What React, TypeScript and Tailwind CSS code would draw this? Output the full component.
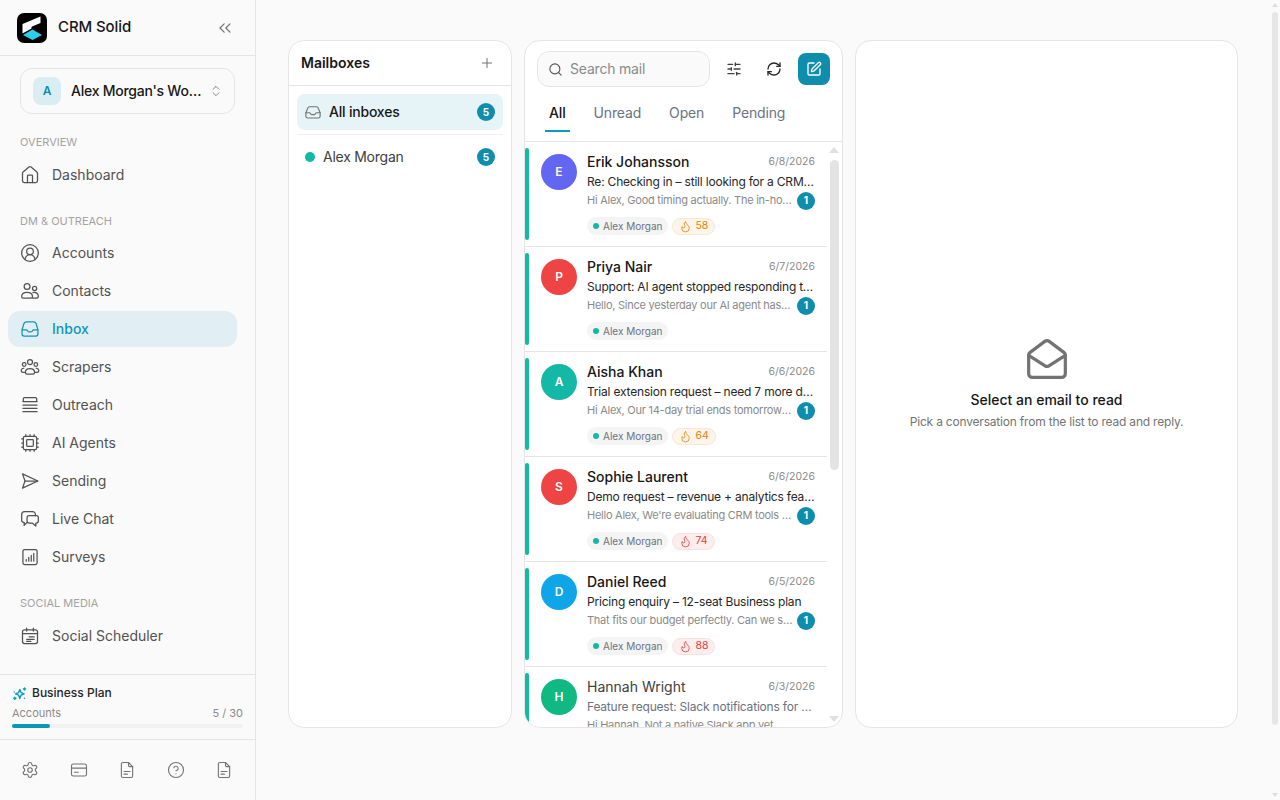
import React from "react";
import { House, CircleUserRound, ChevronsLeft, ChevronsUpDown, Settings, CircleHelp, Plus, Search, SlidersHorizontal, RefreshCw, SquarePen, Flame, MailOpen, Cpu } from "lucide-react";

type IconProps = { className?: string };
const Svg = ({ className, children }: IconProps & { children: React.ReactNode }) => (
  <svg viewBox="0 0 24 24" fill="none" stroke="currentColor" strokeWidth={1.5} strokeLinecap="round" strokeLinejoin="round" className={className}>
    {children}
  </svg>
);
const ContactsIcon = (p: IconProps) => (
  <Svg {...p}>
    <circle cx="8.5" cy="6.5" r="3.5" />
    <circle cx="17.5" cy="9" r="2.5" />
    <path d="M2 18.5C2 15.5 4.7 13.5 8.5 13.5S15 15.5 15 18.5C15 20 14 20.5 13 20.5H4C3 20.5 2 20 2 18.5Z" />
    <path d="M15.5 14C19 13.2 22 15 22 18C22 19.5 21 20.5 20 20.5H15" />
  </Svg>
);
const InboxIcon = (p: IconProps) => (
  <Svg {...p}>
    <path d="M2.500 13V18a2.500 2.500 0 0 0 2.500 2.500h14a2.500 2.500 0 0 0 2.500-2.500V13L19.500 6a3.500 3.500 0 0 0-3-2.500h-9A3.500 3.500 0 0 0 4.500 6Z" />
    <path d="M2.500 13h5c.8 0 1.200.4 1.600 1.100l.3.600c.3.500.7.800 1.300.800h2.600c.6 0 1-.3 1.300-.8l.3-.6c.4-.7.800-1.100 1.600-1.100h5" />
  </Svg>
);
const ScrapersIcon = (p: IconProps) => (
  <Svg {...p}>
    <circle cx="12" cy="6" r="3" />
    <circle cx="5" cy="9" r="2.2" />
    <circle cx="19" cy="9" r="2.2" />
    <path d="M6.500 18.500c0-2.800 2.300-4.500 5.500-4.500s5.500 1.700 5.500 4.500c0 1.300-1 2-2 2h-7c-1 0-2-.7-2-2Z" />
    <path d="M4.500 13.500C2.500 13.800 1.500 15 1.500 16.500c0 1.200.8 2 2 2H6" />
    <path d="M19.500 13.500c2 .3 3 1.500 3 3 0 1.200-.8 2-2 2H18" />
  </Svg>
);
const OutreachIcon = (p: IconProps) => (
  <Svg {...p}>
    <path d="M4 7.500V4.500A1.500 1.500 0 0 1 5.500 3h13A1.500 1.500 0 0 1 20 4.500v3" />
    <path d="M3.500 8h17M3.500 12h17M3.500 16h17M3.500 20h17" />
  </Svg>
);
const SendingIcon = (p: IconProps) => (
  <Svg {...p}>
    <path d="M3 3.500 21.500 12 3 20.500 6 12Z" />
    <path d="M6 12h15" />
  </Svg>
);
const ChatIcon = (p: IconProps) => (
  <Svg {...p}>
    <path d="M8 16.500 5 19.500v-3.500H4.500A2.500 2.500 0 0 1 2 13.500v-7A3.500 3.500 0 0 1 5.500 3h9.500A3.500 3.500 0 0 1 18.500 6.500V8" />
    <path d="M11 8h8.500A2.500 2.500 0 0 1 22 10.500v4a2.500 2.500 0 0 1-2.500 2.500H19v3.500L15 17h-4a2.500 2.500 0 0 1-2.500-2.500v-4A2.500 2.500 0 0 1 11 8Z" />
  </Svg>
);
const SurveyIcon = (p: IconProps) => (
  <Svg {...p}>
    <rect x="3.500" y="3" width="17" height="18" rx="2" />
    <path d="M7.500 17v-2M10.500 17v-4.500M13.500 17V10M16.500 17V7.500" />
  </Svg>
);
const CalendarIcon = (p: IconProps) => (
  <Svg {...p}>
    <rect x="3" y="4.500" width="18" height="16.500" rx="2.500" />
    <path d="M3 9h18M8 2.500v3.500M16 2.500v3.500M11 13h6M8 16h9M8 18.500h5" />
  </Svg>
);
const CardIcon = (p: IconProps) => (
  <Svg {...p}>
    <rect x="2" y="4" width="20" height="16" rx="2.500" />
    <path d="M2 9.500h20M6 15h5" />
  </Svg>
);
const FileIcon = (p: IconProps) => (
  <Svg {...p}>
    <path d="M14 2H6.500A2 2 0 0 0 4.500 4v16a2 2 0 0 0 2 2h11a2 2 0 0 0 2-2V7.500Z" />
    <path d="M14 2V6a1.500 1.500 0 0 0 1.500 1.500h4M8 14h8M8 17.500h4.500" />
  </Svg>
);
const BoxIcon = (p: IconProps) => (
  <Svg {...p}>
    <path d="M2.500 13v4.500A2.500 2.500 0 0 0 5 20h14a2.500 2.500 0 0 0 2.500-2.500V13L19 7a2.800 2.800 0 0 0-2.500-2h-9A2.800 2.800 0 0 0 5 7Z" />
    <path d="M2.500 13H7c.8 0 1.200.4 1.600 1l.4.600c.3.500.8.900 1.400.900h3.200c.6 0 1.100-.4 1.400-.9l.4-.6c.4-.6.8-1 1.600-1h4.500" />
  </Svg>
);
const SparkIcon = (p: IconProps) => (
  <svg viewBox="0 0 24 24" className={p.className} fill="none" stroke="currentColor" strokeWidth={2.25} strokeLinejoin="round" strokeLinecap="round">
    <path d="M12.500 5.500 14.500 10.500 19.500 12.500 14.500 14.500 12.500 20 10.500 14.500 5.500 12.500 10.500 10.500Z" />
    <path d="M3.500 9.500v.01M20 3v3.500M18.200 4.700h3.600M4.500 18v3.500M2.700 19.700h3.600M20 19.500v.01" />
  </svg>
);
const Logo = () => (
  <svg viewBox="0 0 30 30" className="h-[30px] w-[30px] shrink-0">
    <rect width="30" height="30" rx="7" fill="#000" />
    <path d="M5.500 11 23.500 3.500V10L14.500 13.800V15.500L5.500 20.500Z" fill="#fff" />
    <path d="M6 22 15.500 16.500 25 22 15.500 27Z" fill="#2bd0ef" />
  </svg>
);

const NavItem = ({ icon: Icon, label, active }: { icon: React.ComponentType<any>; label: string; active?: boolean }) => (
  <div className={active
    ? "flex h-9 items-center gap-3 rounded-xl bg-[#e1eff4] px-3 text-sm font-medium text-[#0e96b6]"
    : "flex h-9 items-center gap-3 rounded-xl px-3 text-sm text-[#525252]"}>
    <Icon strokeWidth={1.5} className="h-5 w-5 shrink-0" />
    <span>{label}</span>
  </div>
);
const Label = ({ children }: { children: React.ReactNode }) => (
  <div className="px-3 text-[11px] leading-4 text-[#a3a3a3]">{children}</div>
);
const Count = ({ n }: { n: number }) => (
  <span className="flex h-[18px] w-[18px] shrink-0 items-center justify-center rounded-full bg-[#0e8dad] text-[10px] font-bold text-white">{n}</span>
);

type Mail = { name: string; date: string; subject: string; preview: string; color: string; score?: number; read?: boolean };
const mails: Mail[] = [
  { name: "Erik Johansson", date: "6/8/2026", subject: "Re: Checking in – still looking for a CRM solution for our team", preview: "Hi Alex, Good timing actually. The in-house tool we built", color: "bg-[#6366f1]", score: 58 },
  { name: "Priya Nair", date: "6/7/2026", subject: "Support: AI agent stopped responding to new messages", preview: "Hello, Since yesterday our AI agent has been silent on", color: "bg-[#ef4444]" },
  { name: "Aisha Khan", date: "6/6/2026", subject: "Trial extension request – need 7 more days to evaluate", preview: "Hi Alex, Our 14-day trial ends tomorrow and we need", color: "bg-[#14b8a6]", score: 64 },
  { name: "Sophie Laurent", date: "6/6/2026", subject: "Demo request – revenue + analytics features for our team", preview: "Hello Alex, We're evaluating CRM tools for our sales", color: "bg-[#ef4444]", score: 74 },
  { name: "Daniel Reed", date: "6/5/2026", subject: "Pricing enquiry – 12-seat Business plan", preview: "That fits our budget perfectly. Can we schedule a call", color: "bg-[#0ea5e9]", score: 88 },
  { name: "Hannah Wright", date: "6/3/2026", subject: "Feature request: Slack notifications for new replies", preview: "Hi Hannah, Not a native Slack app yet, but there is a way", color: "bg-[#10b981]", read: true },
];

const Row = ({ m }: { m: Mail }) => {
  const hot = (m.score ?? 0) >= 70;
  return (
    <div className="flex h-[105px] shrink-0 border-b border-[#e5e5e5] pt-[6px]">
      <div className="h-[92px] w-1 shrink-0 rounded-full bg-[#14b8a6]" />
      <span className={`ml-3 mt-[6px] flex h-9 w-9 shrink-0 items-center justify-center rounded-full text-xs font-semibold text-white ${m.color}`}>{m.name[0]}</span>
      <div className="ml-[10px] w-[228px] min-w-0">
        <div className="mt-[5px] flex h-[18px] items-center justify-between">
          <span className={m.read ? "text-sm text-[#404040]" : "text-sm font-medium text-[#171717]"}>{m.name}</span>
          <span className="text-[10.5px] text-[#8a8a8a]">{m.date}</span>
        </div>
        <div className={m.read ? "mt-[2px] truncate text-xs leading-[17px] tracking-[-0.2px] text-[#6b7280]" : "mt-[2px] truncate text-xs leading-[17px] tracking-[-0.2px] text-[#262626]"}>{m.subject}</div>
        <div className="mt-[1px] flex h-[19px] items-center justify-between">
          <span className="w-[206px] truncate text-[11px] tracking-[-0.25px] text-[#8a8a8a]">{m.preview}</span>
          {!m.read && <Count n={1} />}
        </div>
        <div className="mt-[7px] flex h-[18px] items-center gap-1">
          <span className="flex h-[18px] items-center gap-1 rounded-full bg-[#f4f4f5] px-[6px] text-[10px] text-[#6b7280]">
            <span className="h-[6px] w-[6px] rounded-full bg-[#14b8a6]" />Alex Morgan
          </span>
          {m.score !== undefined && (
            <span className={hot
              ? "flex h-[17px] items-center gap-[3px] rounded-full border border-[#f9e0e0] bg-[#fdeeee] px-[6px] text-[10.5px] text-[#e53e3e]"
              : "flex h-[17px] items-center gap-[3px] rounded-full border border-[#f7e6d2] bg-[#fdf4ea] px-[6px] text-[10.5px] text-[#e8820c]"}>
              <Flame strokeWidth={1.5} className="h-[13px] w-[13px]" />{m.score}
            </span>
          )}
        </div>
      </div>
    </div>
  );
};

export default function App() {
  return (
    <div className="flex h-screen overflow-hidden bg-[#fafafa] font-['Inter','Liberation_Sans',sans-serif]">
      <aside className="flex w-[256px] shrink-0 flex-col border-r border-[#e5e5e5]">
        <div className="flex h-[56px] shrink-0 items-center border-b border-[#e5e5e5] pl-[17px] pr-5">
          <Logo />
          <span className="ml-[11px] flex-1 text-[15px] font-medium tracking-[-0.1px] text-[#171717]">CRM Solid</span>
          <ChevronsLeft strokeWidth={1.5} className="h-5 w-5 text-[#737373]" />
        </div>
        <div className="flex-1 pl-2 pr-[18px] pt-3">
          <div className="ml-3 mr-[2px] flex h-[46px] items-center rounded-xl border border-[#e5e5e5] pl-3 pr-[11px]">
            <span className="flex h-7 w-7 shrink-0 items-center justify-center rounded-lg bg-[#d9edf3] text-xs font-semibold text-[#0e8dad]">A</span>
            <span className="ml-[10px] min-w-0 flex-1 truncate text-sm font-medium tracking-[-0.25px] text-[#171717]">Alex Morgan's Workspace</span>
            <ChevronsUpDown strokeWidth={1.5} className="ml-1 h-[14px] w-[14px] shrink-0 text-[#737373]" />
          </div>
          <div className="mt-[20px]"><Label>OVERVIEW</Label></div>
          <div className="mt-[7px]"><NavItem icon={House} label="Dashboard" /></div>
          <div className="mt-[20px]"><Label>DM &amp; OUTREACH</Label></div>
          <div className="mt-[6px] flex flex-col gap-[2px]">
            <NavItem icon={CircleUserRound} label="Accounts" />
            <NavItem icon={ContactsIcon} label="Contacts" />
            <NavItem icon={InboxIcon} label="Inbox" active />
            <NavItem icon={ScrapersIcon} label="Scrapers" />
            <NavItem icon={OutreachIcon} label="Outreach" />
            <NavItem icon={Cpu} label="AI Agents" />
            <NavItem icon={SendingIcon} label="Sending" />
            <NavItem icon={ChatIcon} label="Live Chat" />
            <NavItem icon={SurveyIcon} label="Surveys" />
          </div>
          <div className="mt-[20px]"><Label>SOCIAL MEDIA</Label></div>
          <div className="mt-[7px]"><NavItem icon={CalendarIcon} label="Social Scheduler" /></div>
        </div>
        <div className="h-[65px] shrink-0 border-t border-[#e5e5e5] px-3 pt-[10px]">
          <div className="flex items-center gap-[5px]">
            <SparkIcon className="h-[15px] w-[15px] text-[#0e9ab8]" />
            <span className="text-xs font-medium text-[#262626]">Business Plan</span>
          </div>
          <div className="mt-[4px] flex justify-between text-[11px] leading-4 text-[#8a8a8a]"><span>Accounts</span><span>5 / 30</span></div>
          <div className="mt-[3px] h-1 rounded-full bg-[#f2f2f2]"><div className="h-1 w-[38px] rounded-full bg-[#0e96b6]" /></div>
        </div>
        <div className="flex h-[61px] shrink-0 items-center justify-between border-t border-[#e5e5e5] pl-[21px] pr-[22px] text-[#737373]">
          <Settings strokeWidth={1.5} className="h-[18px] w-[18px]" />
          <CardIcon className="h-[18px] w-[18px]" />
          <FileIcon className="h-[18px] w-[18px]" />
          <CircleHelp strokeWidth={1.5} className="h-[18px] w-[18px]" />
          <FileIcon className="h-[18px] w-[18px]" />
        </div>
      </aside>

      <main className="relative min-w-0 flex-1 overflow-hidden pr-[10px]">
        <div className="mt-10 flex h-[688px] gap-3 px-8">
          <section className="flex w-[224px] shrink-0 flex-col rounded-2xl border border-[#e5e5e5] bg-white">
            <div className="flex h-[45px] shrink-0 items-center justify-between border-b border-[#e5e5e5] pl-3 pr-4">
              <span className="text-sm font-semibold text-[#171717]">Mailboxes</span>
              <Plus strokeWidth={1.5} className="h-4 w-4 text-[#737373]" />
            </div>
            <div className="px-2 pt-2">
              <div className="flex h-9 items-center rounded-lg bg-[#e6f3f7] pl-[7px] pr-2">
                <BoxIcon className="h-[18px] w-[18px] text-[#737373]" />
                <span className="ml-[7px] flex-1 text-sm font-medium tracking-[-0.2px] text-[#171717]">All inboxes</span>
                <Count n={5} />
              </div>
              <div className="mt-1 h-px bg-[#f0f0f0]" />
              <div className="mt-1 flex h-9 items-center pl-2 pr-2">
                <span className="h-[10px] w-[10px] rounded-full bg-[#14b8a6]" />
                <span className="ml-2 flex-1 text-sm tracking-[-0.25px] text-[#404040]">Alex Morgan</span>
                <Count n={5} />
              </div>
            </div>
          </section>

          <section className="flex w-[319px] shrink-0 flex-col overflow-hidden rounded-2xl border border-[#e5e5e5] bg-white">
            <div className="flex h-[56px] shrink-0 items-start px-3 pt-[10px]">
              <div className="flex h-9 w-[173px] items-center gap-[7px] rounded-xl border border-[#e5e5e5] bg-[#fafafa] px-[10px]">
                <Search strokeWidth={1.75} className="h-[15px] w-[15px] text-[#525252]" />
                <span className="text-sm tracking-[-0.2px] text-[#8a8a8a]">Search mail</span>
              </div>
              <SlidersHorizontal strokeWidth={2} className="ml-4 mt-[10px] h-4 w-4 text-[#404040]" />
              <RefreshCw strokeWidth={2} className="ml-6 mt-[10px] h-4 w-4 text-[#262626]" />
              <span className="ml-4 mt-[2px] flex h-8 w-8 items-center justify-center rounded-lg bg-[#0e8dad]">
                <SquarePen strokeWidth={2} className="h-4 w-4 text-white" />
              </span>
            </div>
            <div className="flex h-[45px] shrink-0 gap-5 border-b border-[#e5e5e5] pl-5 text-sm tracking-[-0.15px] text-[#6b7280]">
              <span className="flex h-[35px] items-center border-b-2 border-[#0e9ab8] px-1 pb-[2px] font-medium text-[#171717]">All</span>
              <span className="flex h-[35px] items-center px-1 pb-1">Unread</span>
              <span className="flex h-[35px] items-center px-1 pb-1">Open</span>
              <span className="flex h-[35px] items-center px-1 pb-1">Pending</span>
            </div>
            <div className="relative min-h-0 flex-1 overflow-hidden pr-[15px]">
              {mails.map((m) => <Row key={m.name} m={m} />)}
              <div className="absolute right-[3px] top-[5px] h-0 w-0 border-x-[5px] border-b-[6px] border-x-transparent border-b-[#e0e0e0]" />
              <div className="absolute right-[3px] top-[18px] h-[310px] w-[9px] rounded-full bg-[#e3e3e3]" />
              <div className="absolute bottom-[5px] right-[3px] h-0 w-0 border-x-[5px] border-t-[6px] border-x-transparent border-t-[#e0e0e0]" />
            </div>
          </section>

          <section className="flex min-w-0 flex-1 flex-col items-center justify-center rounded-2xl border border-[#e5e5e5] bg-white">
            <MailOpen strokeWidth={1.75} className="h-11 w-11 text-[#737373]" />
            <div className="mt-[9px] text-sm font-medium leading-5 text-[#171717]">Select an email to read</div>
            <div className="mt-[3px] text-xs leading-[18px] tracking-[-0.2px] text-[#737373]">Pick a conversation from the list to read and reply.</div>
          </section>
        </div>
        <div className="absolute right-[2px] top-[3px] h-0 w-0 border-x-[3px] border-b-[4px] border-x-transparent border-b-[#dedede]" />
        <div className="absolute right-[2px] top-3 h-[713px] w-[6px] rounded-full bg-[#e6e6e6]" />
        <div className="absolute bottom-[3px] right-[2px] h-0 w-0 border-x-[3px] border-t-[4px] border-x-transparent border-t-[#dedede]" />
      </main>
    </div>
  );
}
